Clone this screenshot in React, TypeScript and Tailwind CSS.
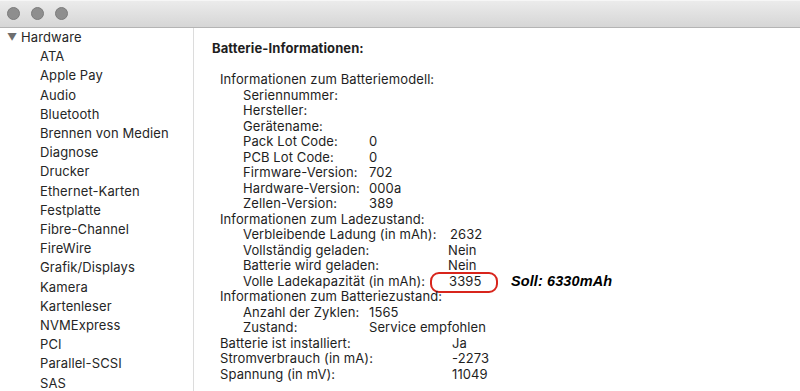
import React from 'react'

const sidebarItems = [
    'ATA', 'Apple Pay', 'Audio', 'Bluetooth', 'Brennen von Medien', 'Diagnose', 'Drucker',
    'Ethernet-Karten', 'Festplatte', 'Fibre-Channel', 'FireWire', 'Grafik/Displays', 'Kamera',
    'Kartenleser', 'NVMExpress', 'PCI', 'Parallel-SCSI', 'SAS',
]

type Row = { label: string; value?: string; indent?: boolean; valueX?: number; circled?: boolean }

// valueX is measured from the left edge of the content column (x=220)
const rows: Row[] = [
    { label: 'Informationen zum Batteriemodell:' },
    { label: 'Seriennummer:', indent: true },
    { label: 'Hersteller:', indent: true },
    { label: 'Gerätename:', indent: true },
    { label: 'Pack Lot Code:', value: '0', indent: true, valueX: 149 },
    { label: 'PCB Lot Code:', value: '0', indent: true, valueX: 149 },
    { label: 'Firmware-Version:', value: '702', indent: true, valueX: 149 },
    { label: 'Hardware-Version:', value: '000a', indent: true, valueX: 149 },
    { label: 'Zellen-Version:', value: '389', indent: true, valueX: 149 },
    { label: 'Informationen zum Ladezustand:' },
    { label: 'Verbleibende Ladung (in mAh):', value: '2632', indent: true, valueX: 230 },
    { label: 'Vollständig geladen:', value: 'Nein', indent: true, valueX: 228 },
    { label: 'Batterie wird geladen:', value: 'Nein', indent: true, valueX: 228 },
    { label: 'Volle Ladekapazität (in mAh):', value: '3395', indent: true, valueX: 229, circled: true },
    { label: 'Informationen zum Batteriezustand:' },
    { label: 'Anzahl der Zyklen:', value: '1565', indent: true, valueX: 149 },
    { label: 'Zustand:', value: 'Service empfohlen', indent: true, valueX: 149 },
    { label: 'Batterie ist installiert:', value: 'Ja', valueX: 232 },
    { label: 'Stromverbrauch (in mA):', value: '-2273', valueX: 232 },
    { label: 'Spannung (in mV):', value: '11049', valueX: 232 },
]

function TitleBar() {
    return (
        <div className="h-[28px] shrink-0 border-b border-[#b4b4b4] bg-gradient-to-b from-[#ececec] to-[#d6d6d6] flex items-center gap-[11px] pl-[7px] shadow-[inset_0_1px_0_#f6f6f6]">
            <span className="w-[13px] h-[13px] rounded-full bg-[#8e8e8e] border border-[#7c7c7c]" />
            <span className="w-[13px] h-[13px] rounded-full bg-[#8e8e8e] border border-[#7c7c7c]" />
            <span className="w-[13px] h-[13px] rounded-full bg-[#8e8e8e] border border-[#7c7c7c]" />
        </div>
    )
}

function Sidebar() {
    return (
        <div className="w-[194px] shrink-0 border-r border-[#dcdcdc] text-[13px] leading-[19.2px] text-[#262626]">
            <div className="flex items-center pl-[7px]">
                <span className="text-[10px] text-[#6e6e6e] w-[14px]">▼</span>
                <span>Hardware</span>
            </div>
            {sidebarItems.map((item) => (
                <div key={item} className="pl-[40px]">{item}</div>
            ))}
        </div>
    )
}

export default function App() {
    return (
        <div className="w-[800px] h-[391px] bg-white flex flex-col overflow-hidden font-['Inter',sans-serif] tracking-[0.1px]">
            <TitleBar />
            <div className="flex flex-1 min-h-0">
                <Sidebar />
                <div className="flex-1 pl-[18px] pt-[11px] text-[#1e1e1e]">
                    <div className="text-[13px] font-bold leading-[18px]">Batterie-Informationen:</div>
                    <div className="mt-[15px] pl-[8px] text-[13px] leading-[15.5px]">
                        {rows.map((r) => (
                            <div key={r.label} className="relative h-[15.5px] whitespace-nowrap">
                                <span className={r.indent ? 'pl-[23px]' : ''}>{r.label}</span>
                                {r.value && (
                                    <span className="absolute top-0" style={{ left: r.valueX }}>{r.value}</span>
                                )}
                                {r.circled && (
                                    <>
                                        <span className="absolute left-[210px] top-[-2px] w-[68px] h-[21px] rounded-[9px] border-2 border-[#d8251c]" />
                                        <span className="absolute left-[291px] top-[0px] text-[14.5px] font-bold italic text-black font-['Liberation_Sans',sans-serif]">Soll: 6330mAh</span>
                                    </>
                                )}
                            </div>
                        ))}
                    </div>
                </div>
            </div>
        </div>
    )
}
